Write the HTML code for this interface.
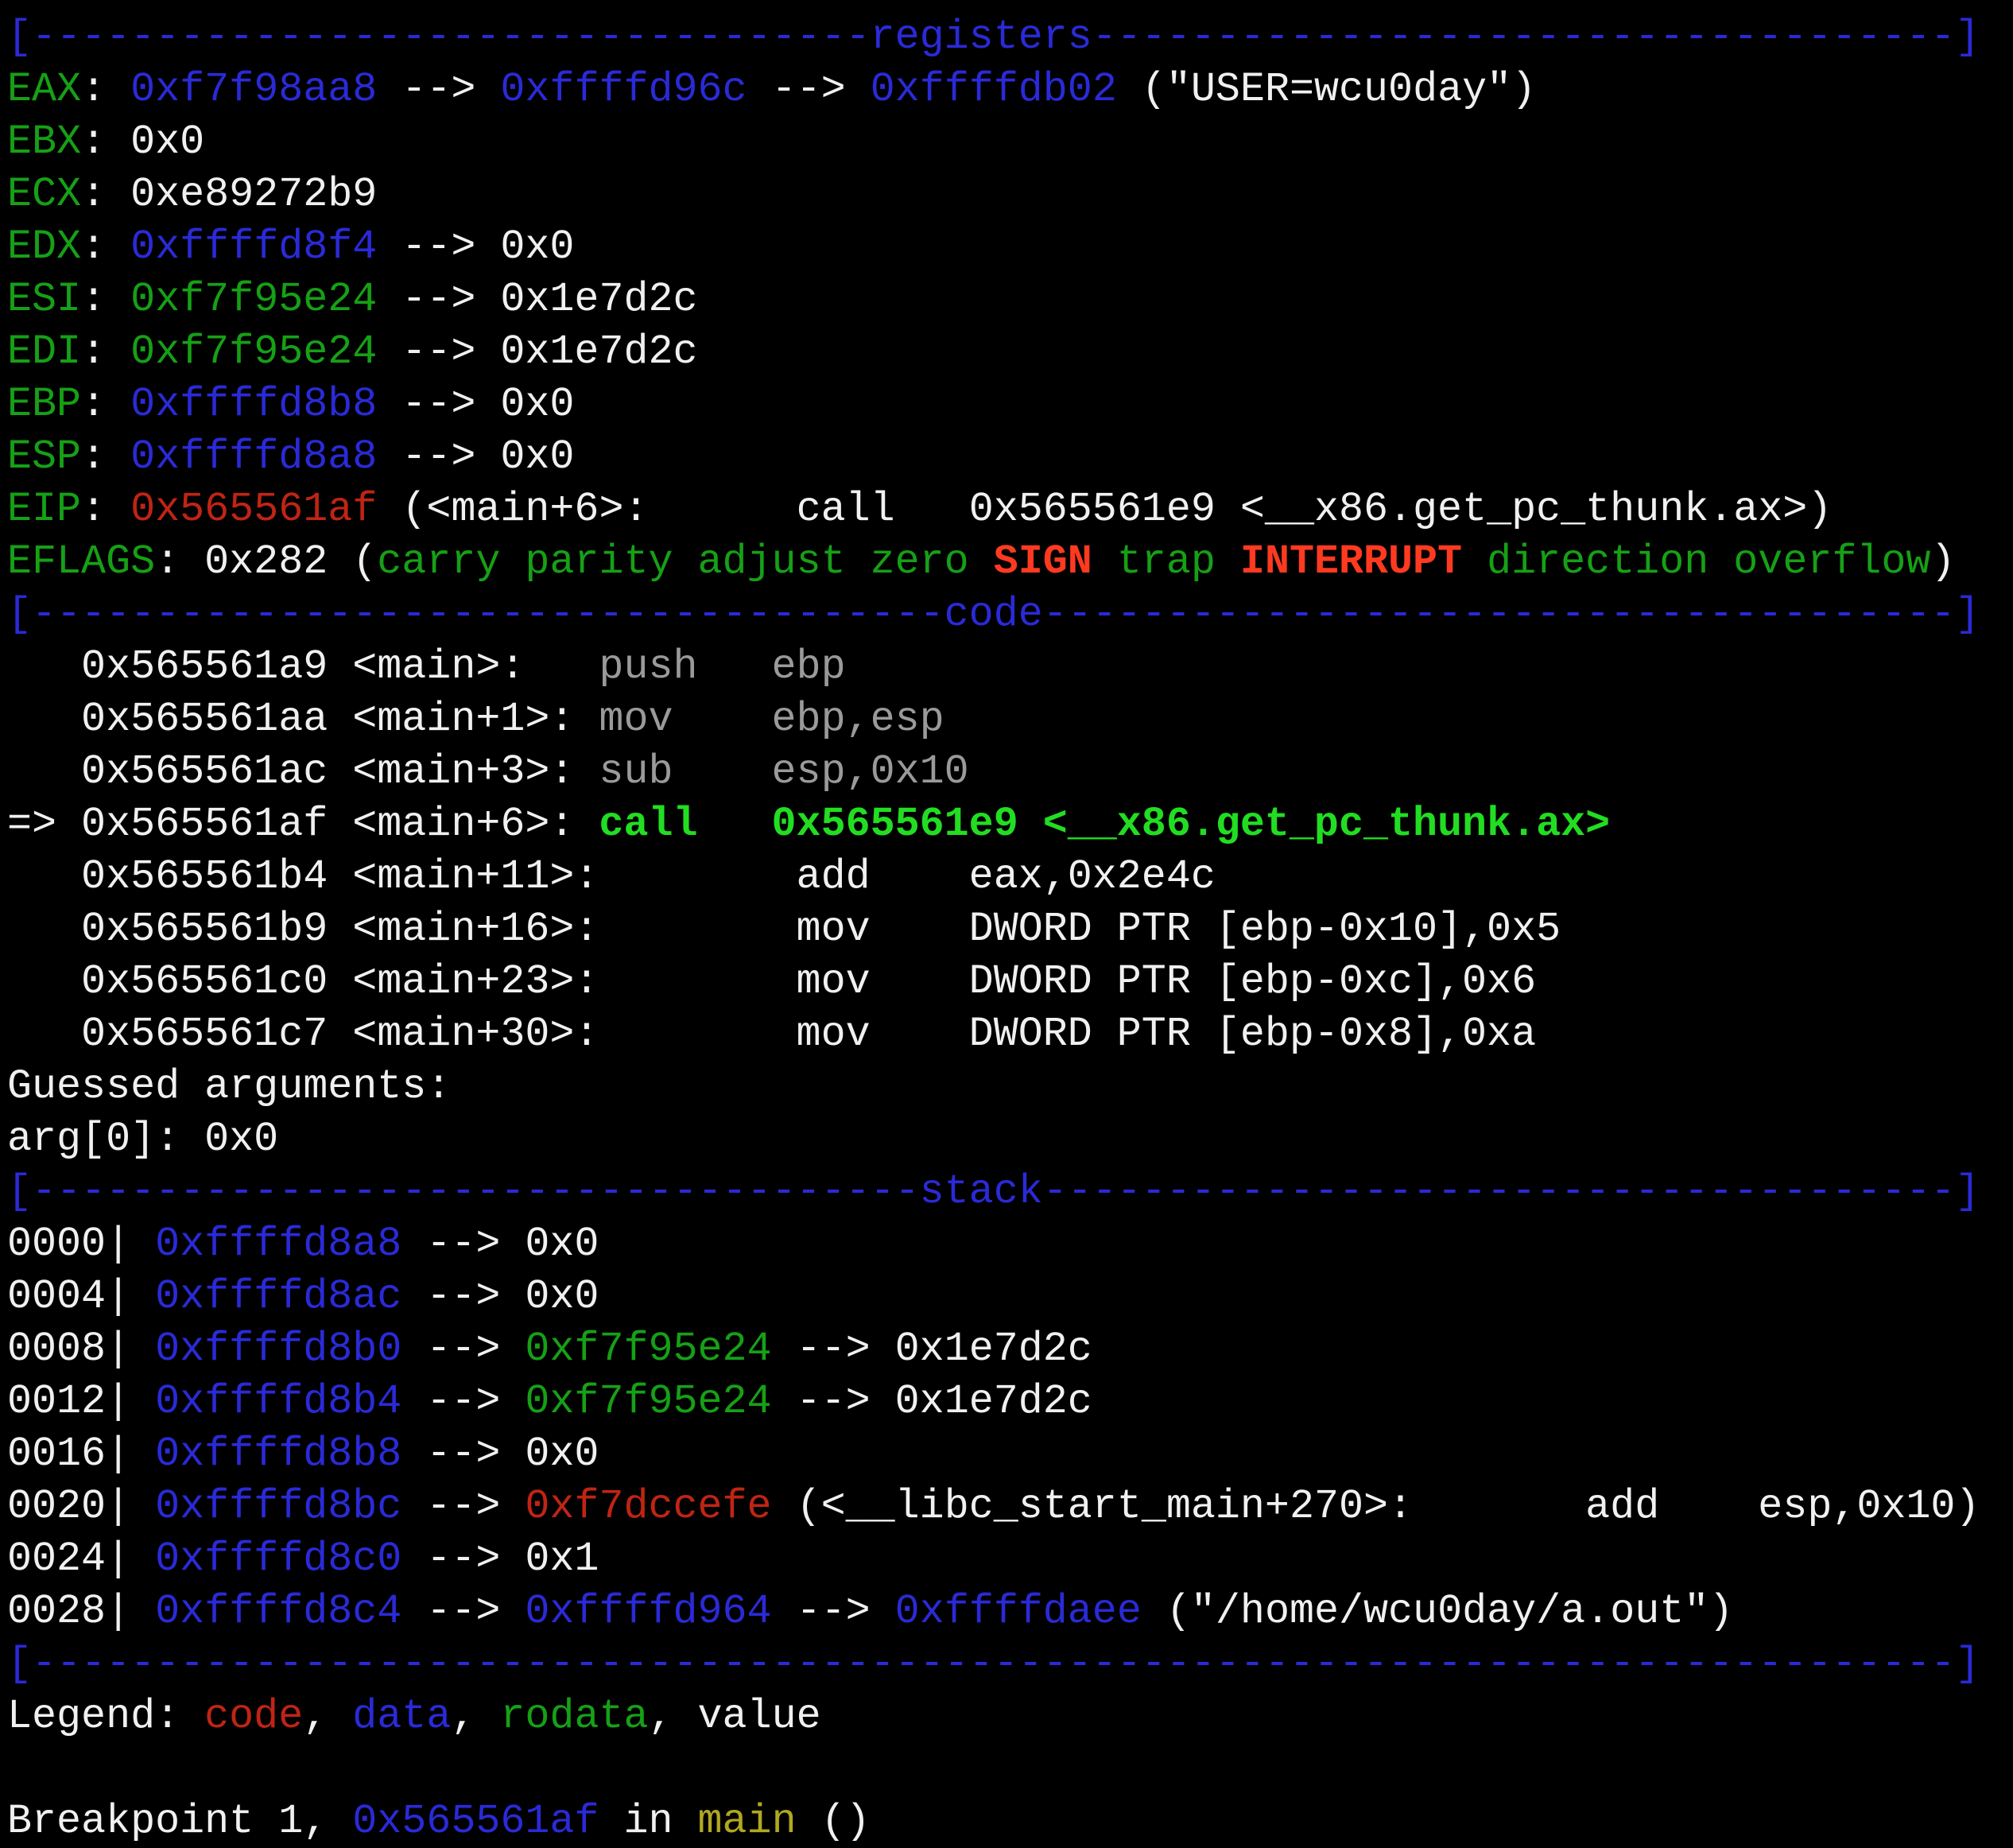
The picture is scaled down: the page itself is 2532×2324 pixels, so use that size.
<!DOCTYPE html>
<html><head><meta charset="utf-8"><style>
html,body{margin:0;padding:0;background:#000;}
body{width:2532px;height:2324px;overflow:hidden;position:relative;}
pre{position:absolute;left:9px;top:14px;margin:0;font-family:"Liberation Mono","DejaVu Sans Mono",monospace;font-size:51.7px;line-height:66px;color:#f0f0f0;white-space:pre;}
.b{color:#2a2ad8}.g{color:#16a016}.r{color:#c02414}.gr{color:#9a9a9a}
.bg{color:#22dd22;font-weight:bold}.br{color:#ff3a20;font-weight:bold}.y{color:#b0a820}
</style></head><body>
<pre><span class="b">[----------------------------------registers-----------------------------------]</span>
<span class="g">EAX</span>: <span class="b">0xf7f98aa8</span> --&gt; <span class="b">0xffffd96c</span> --&gt; <span class="b">0xffffdb02</span> ("USER=wcu0day")
<span class="g">EBX</span>: 0x0
<span class="g">ECX</span>: 0xe89272b9
<span class="g">EDX</span>: <span class="b">0xffffd8f4</span> --&gt; 0x0
<span class="g">ESI</span>: <span class="g">0xf7f95e24</span> --&gt; 0x1e7d2c
<span class="g">EDI</span>: <span class="g">0xf7f95e24</span> --&gt; 0x1e7d2c
<span class="g">EBP</span>: <span class="b">0xffffd8b8</span> --&gt; 0x0
<span class="g">ESP</span>: <span class="b">0xffffd8a8</span> --&gt; 0x0
<span class="g">EIP</span>: <span class="r">0x565561af</span> (&lt;main+6&gt;:      call   0x565561e9 &lt;__x86.get_pc_thunk.ax&gt;)
<span class="g">EFLAGS</span>: 0x282 (<span class="g">carry parity adjust zero </span><span class="br">SIGN</span><span class="g"> trap </span><span class="br">INTERRUPT</span><span class="g"> direction overflow</span>)
<span class="b">[-------------------------------------code-------------------------------------]</span>
   0x565561a9 &lt;main&gt;:   <span class="gr">push   ebp</span>
   0x565561aa &lt;main+1&gt;: <span class="gr">mov    ebp,esp</span>
   0x565561ac &lt;main+3&gt;: <span class="gr">sub    esp,0x10</span>
=&gt; 0x565561af &lt;main+6&gt;: <span class="bg">call   0x565561e9 &lt;__x86.get_pc_thunk.ax&gt;</span>
   0x565561b4 &lt;main+11&gt;:        add    eax,0x2e4c
   0x565561b9 &lt;main+16&gt;:        mov    DWORD PTR [ebp-0x10],0x5
   0x565561c0 &lt;main+23&gt;:        mov    DWORD PTR [ebp-0xc],0x6
   0x565561c7 &lt;main+30&gt;:        mov    DWORD PTR [ebp-0x8],0xa
Guessed arguments:
arg[0]: 0x0
<span class="b">[------------------------------------stack-------------------------------------]</span>
0000| <span class="b">0xffffd8a8</span> --&gt; 0x0
0004| <span class="b">0xffffd8ac</span> --&gt; 0x0
0008| <span class="b">0xffffd8b0</span> --&gt; <span class="g">0xf7f95e24</span> --&gt; 0x1e7d2c
0012| <span class="b">0xffffd8b4</span> --&gt; <span class="g">0xf7f95e24</span> --&gt; 0x1e7d2c
0016| <span class="b">0xffffd8b8</span> --&gt; 0x0
0020| <span class="b">0xffffd8bc</span> --&gt; <span class="r">0xf7dccefe</span> (&lt;__libc_start_main+270&gt;:       add    esp,0x10)
0024| <span class="b">0xffffd8c0</span> --&gt; 0x1
0028| <span class="b">0xffffd8c4</span> --&gt; <span class="b">0xffffd964</span> --&gt; <span class="b">0xffffdaee</span> ("/home/wcu0day/a.out")
<span class="b">[------------------------------------------------------------------------------]</span>
Legend: <span class="r">code</span>, <span class="b">data</span>, <span class="g">rodata</span>, value

Breakpoint 1, <span class="b">0x565561af</span> in <span class="y">main</span> ()</pre>
</body></html>
